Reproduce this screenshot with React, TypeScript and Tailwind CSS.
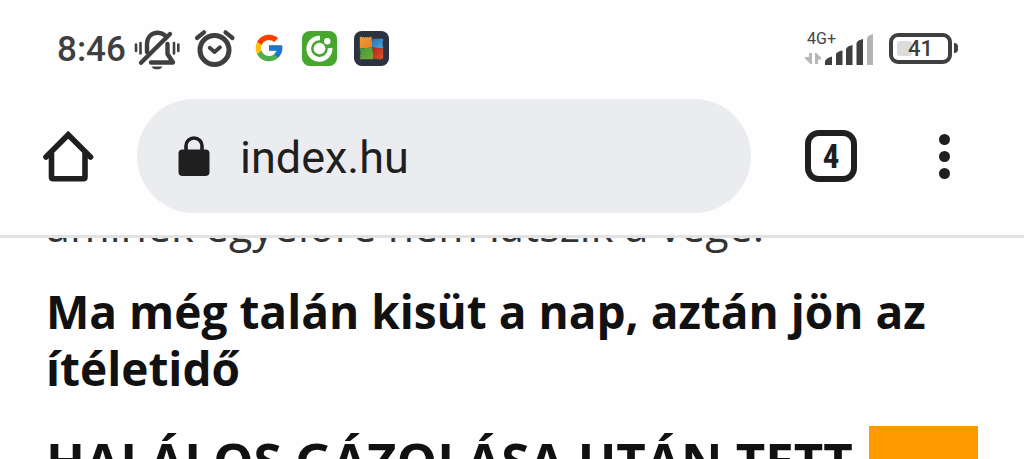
import React from 'react';
import { FcGoogle } from 'react-icons/fc';

const SilentIcon = () => (
  <svg className="w-[46px] h-[42px]" viewBox="134 28 46 42" fill="none" stroke="#3f3f3f" strokeLinecap="round">
    <path d="M136 43.5V50M140.5 42V52.5M174 42V52.5M178.3 43.5V50" strokeWidth="2.6" />
    <path d="M147 51V43C147 36.5 151 32.3 157 31.8C160 31.5 162.5 32.5 164.5 34" strokeWidth="4.4" />
    <path d="M167.5 43V53L173 61.5H151" strokeWidth="4.4" strokeLinejoin="round" />
    <path d="M170 33L141 61.8" strokeWidth="4.4" />
    <path d="M151.5 65.5H162.5C161 69.3 153 69.3 151.5 65.5Z" fill="#3f3f3f" stroke="none" />
  </svg>
);

const AlarmIcon = () => (
  <svg className="w-[42px] h-[40px]" viewBox="194 28 42 40" fill="none" stroke="#3f3f3f" strokeWidth="4.2" strokeLinecap="round" strokeLinejoin="round">
    <circle cx="214.5" cy="50" r="14.5" strokeWidth="5" />
    <path d="M197 38L204 32.3M225.5 32.3L232.5 38" />
    <path d="M209.7 47.8L214.5 52L220 47.3" strokeWidth="3.8" />
  </svg>
);

const CameraAppIcon = () => (
  <svg className="w-[35px] h-[35px]" viewBox="0 0 36 36">
    <rect width="36" height="36" rx="8" fill="#47a62e" />
    <path d="M18.5 7.2A11 11 0 1 0 28.9 17.5" fill="none" stroke="#fff" strokeWidth="4.8" />
    <circle cx="18" cy="18" r="6" fill="#fff" />
    <circle cx="26" cy="10.5" r="3.3" fill="#fff" />
  </svg>
);

const ShieldAppIcon = () => (
  <svg className="w-[35px] h-[35px]" viewBox="0 0 36 36">
    <defs>
      <linearGradient id="orange" x1="0" y1="0" x2="1" y2="1">
        <stop offset="0" stopColor="#f0a030" />
        <stop offset="1" stopColor="#e87a28" />
      </linearGradient>
      <linearGradient id="blue" x1="0" y1="0" x2="1" y2="1">
        <stop offset="0" stopColor="#2c6cb0" />
        <stop offset="1" stopColor="#48a8d8" />
      </linearGradient>
      <linearGradient id="green" x1="0" y1="0" x2="1" y2="1">
        <stop offset="0" stopColor="#3f9a3c" />
        <stop offset="1" stopColor="#7aa832" />
      </linearGradient>
      <linearGradient id="red" x1="0" y1="0" x2="1" y2="1">
        <stop offset="0" stopColor="#b3231f" />
        <stop offset="1" stopColor="#e05a28" />
      </linearGradient>
    </defs>
    <rect width="36" height="36" rx="8" fill="#2b3240" />
    <path d="M6 6H8L9 7L10 6L11 7L12 6L13 7L14 6L15 7L16 6H18L19 17L6 18Z" fill="url(#orange)" />
    <path d="M18 8H30V10L29 11L30 12L29 13L30 14L29 15L30 16V18L19 17Z" fill="url(#blue)" />
    <path d="M6 18L19 17L20 29H6V27L7 26L6 25L7 23L6 22L7 21L6 20Z" fill="url(#green)" />
    <path d="M19 17L30 18V28L29 29L28 28L27 30L25 28L24 30L23 28L22 29L20 28Z" fill="url(#red)" />
  </svg>
);

const SignalIcon = () => (
  <svg className="w-[70px] h-[36px]" viewBox="804 30 70 36">
    <text x="807" y="44" fontSize="16" fill="#444" fontFamily="Roboto, sans-serif">4G+</text>
    <g fill="#b8b8b8">
      <path d="M809 53H812V64H810.5L805 58.5V57H809Z" />
      <path d="M815 64V53H816.5L821 57.5V59.5H818V64Z" />
    </g>
    <g fill="#3f3f3f">
      <path d="M825 65V61Q827 57.5 832 56.5V65Z" />
      <path d="M836 65V54Q837 51.5 842.5 50.5V65Z" />
      <path d="M846 65V49Q847 46 852.5 45V65Z" />
      <path d="M856.5 65V43Q857.5 40 863 39V65Z" />
    </g>
    <path d="M867 65V38Q868 35 873 34V65Z" fill="#b4b4b4" />
  </svg>
);

const HomeIcon = () => (
  <svg className="w-[52px] h-[52px]" viewBox="0 0 52 52" fill="none" stroke="#1f1f1f" strokeWidth="5.6" strokeLinejoin="round">
    <path d="M9.5 23V47Q9.5 48.8 11.3 48.8H41.2Q43 48.8 43 47V23" />
    <path d="M4 27L26.2 4.8L48.5 27" strokeLinecap="round" strokeLinejoin="miter" />
  </svg>
);

const LockIcon = () => (
  <svg className="w-[32px] h-[40px] shrink-0" viewBox="0 0 32 40">
    <path d="M8 15V10A8 8 0 0 1 24 10V15" fill="none" stroke="#1f1f1f" strokeWidth="3.6" />
    <rect x="0.5" y="13.5" width="31" height="26.5" rx="4" fill="#1f1f1f" />
  </svg>
);

const StatusBar = () => (
  <div className="flex h-[99px] items-center justify-between pl-[57px] pr-[66px] text-[#3f3f3f]">
    <div className="flex items-center">
      <span className="w-[77px] text-[35px] leading-[40px] font-medium">8:46</span>
      <SilentIcon />
      <div className="ml-[14px] flex items-center gap-[17px] pb-[3px]">
        <AlarmIcon />
        <div className="flex w-[32px] justify-center">
          <FcGoogle size={32} />
        </div>
        <CameraAppIcon />
        <ShieldAppIcon />
      </div>
    </div>
    <div className="flex items-center gap-[15px] pb-[3px]">
      <SignalIcon />
      <div className="flex items-center gap-0.5">
        <div className="relative flex h-[31px] w-[63px] items-center justify-center rounded-[9px] border-4 border-[#3f3f3f]">
          <span className="absolute left-1 top-1 h-[15px] w-[15px] rounded-[3px] bg-[#dcdcdc]"></span>
          <span className="relative pt-0.5 text-[22px] leading-[22px] font-medium">41</span>
        </div>
        <span className="h-[10px] w-1 rounded-r bg-[#3f3f3f]"></span>
      </div>
    </div>
  </div>
);

const Toolbar = () => (
  <div className="flex items-center pl-[42px] pr-[64px] text-[#1f1f1f]">
    <button aria-label="Kezdőlap"><HomeIcon /></button>
    <div className="ml-[43px] flex h-[114px] min-w-0 flex-1 items-center gap-[30px] rounded-full bg-[#ebecf0] px-[41px]">
      <LockIcon />
      <input
        type="text"
        aria-label="Cím"
        defaultValue="index.hu"
        className="w-full min-w-0 bg-transparent pt-[3px] text-[45px] leading-[56px] outline-none"
      />
    </div>
    <button
      aria-label="Lapok"
      className="ml-[54px] flex h-[52px] w-[52px] shrink-0 items-center justify-center rounded-[14px] border-[6px] border-[#1f1f1f] pt-0.5 font-['Roboto_Condensed',Roboto,sans-serif] text-[33px] leading-[40px] font-bold"
    >
      4
    </button>
    <button aria-label="Menü" className="ml-[71px] flex w-[32px] shrink-0 flex-col items-center gap-[6px]">
      <span className="h-[11px] w-[11px] rounded-full bg-[#1f1f1f]"></span>
      <span className="h-[11px] w-[11px] rounded-full bg-[#1f1f1f]"></span>
      <span className="h-[11px] w-[11px] rounded-full bg-[#1f1f1f]"></span>
    </button>
  </div>
);

export default function App() {
  return (
    <div className="flex h-screen flex-col overflow-hidden bg-[#fefefe] font-['Roboto',sans-serif]">
      <header className="shrink-0 border-b-[3px] border-[#e1e2e1] pb-[22px]">
        <StatusBar />
        <Toolbar />
      </header>
      {/* Article list, scrolled partly under the toolbar */}
      <main className="min-h-0 flex-1 overflow-hidden px-[46px] font-['Open_Sans',sans-serif] leading-[57px] text-[#111]">
        <p className="-mt-[41px] text-[43px] text-[#333]">aminek egyelőre nem látszik a vége.</p>
        <h2 className="mt-[29px] text-[46px] font-bold">
          <a href="#idojaras">Ma még talán kisüt a nap, aztán jön az ítéletidő</a>
        </h2>
        <div className="mt-[29px] flex gap-4">
          <h2 className="pt-[6px] text-[51px] font-bold">
            <a href="#gazolas">HALÁLOS GÁZOLÁSA UTÁN TETT</a>
          </h2>
          <div className="h-[57px] w-[109px] shrink-0 bg-[#ff9a00]"></div>
        </div>
      </main>
    </div>
  );
}
